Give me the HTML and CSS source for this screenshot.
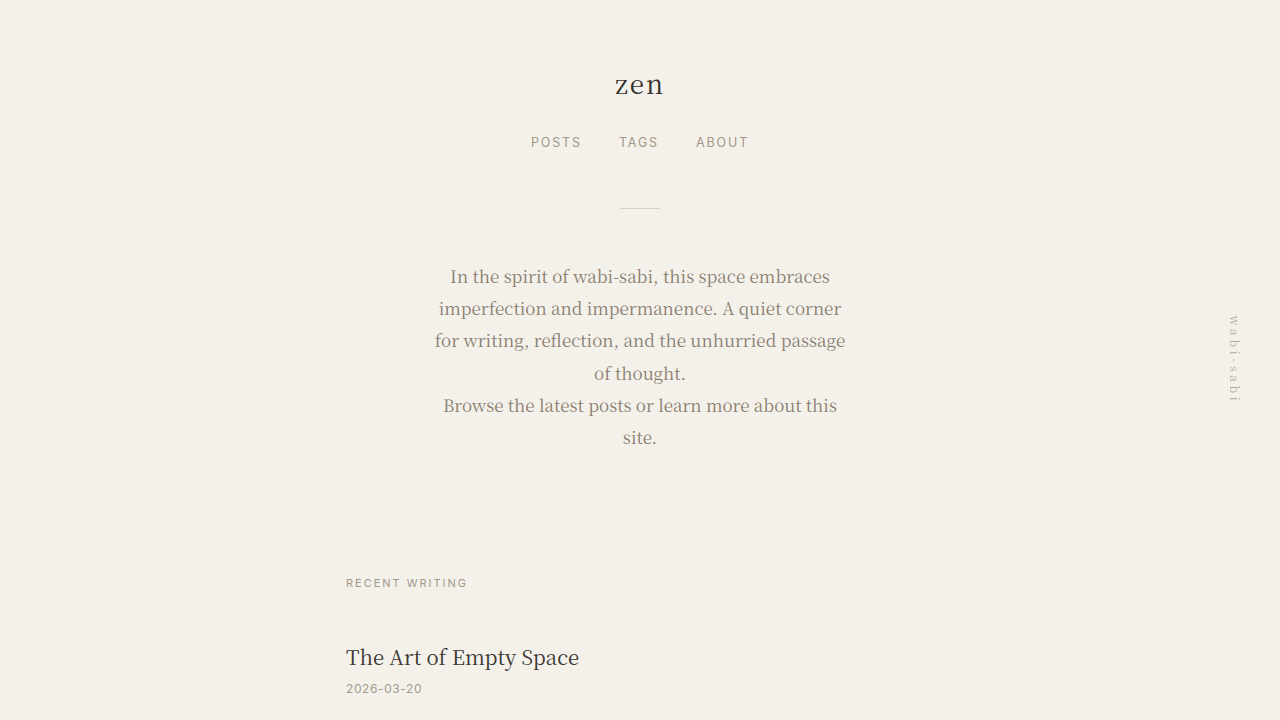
FILE: index.html
```html
<!DOCTYPE html>
<html lang="en">
	<head>
		<meta charset="UTF-8">
		<meta name="viewport" content="width=device-width, initial-scale=1.0" />
		<title>zen</title>
		<link rel="stylesheet" href="styles.css">
	</head>
	<body>
		<header class="site-header">
			<h1 class="site-title">zen</h1>
			<nav class="site-nav">
				<a href="#">Posts</a>
				<a href="#">Tags</a>
				<a href="#">About</a>
			</nav>
			<div class="divider"></div>
		</header>

		<section class="intro">
			<p>In the spirit of wabi-sabi, this space embraces imperfection and impermanence. A quiet corner for writing, reflection, and the unhurried passage of thought.</p>
			<p>Browse the latest posts or learn more about this site.</p>
		</section>

		<main class="recent">
			<h2 class="section-label">Recent Writing</h2>
			<article class="post-item">
				<h3 class="post-title"><a href="#">The Art of Empty Space</a></h3>
				<time class="post-date">2026-03-20</time>
			</article>
		</main>

		<div class="side-mark">wabi-sabi</div>
	</body>
</html>
```

FILE: styles.css
```css
body {
	margin: 0;
	background: #f4f1eb;
	color: #3a3631;
	font-family: "Noto Serif CJK JP", "DejaVu Serif", serif;
}

a {
	color: inherit;
	text-decoration: none;
}

.site-header {
	display: flex;
	flex-direction: column;
	align-items: center;
	padding-top: 65px;
}

.site-title {
	margin: 0;
	font-size: 26px;
	font-weight: 400;
	line-height: 36px;
	letter-spacing: 0.07em;
	color: #34302b;
}

.site-nav {
	display: flex;
	gap: 37px;
	margin-top: 34px;
	font-family: Inter, "Noto Sans", sans-serif;
	font-size: 12.5px;
	line-height: 15px;
	letter-spacing: 0.15em;
	text-transform: uppercase;
	color: #a39786;
}

.divider {
	width: 40px;
	height: 1px;
	background: #d9d1c5;
	margin-top: 58px;
}

.intro {
	width: 420px;
	margin: 51px auto 0;
	text-align: center;
	font-size: 17px;
	line-height: 32.2px;
	color: #8b7e70;
}

.intro p {
	margin: 0;
}

.recent {
	width: 588px;
	margin: 124px auto 0;
}

.section-label {
	margin: 0;
	font-family: Inter, "Noto Sans", sans-serif;
	font-size: 11px;
	font-weight: 400;
	line-height: 13px;
	letter-spacing: 0.18em;
	text-transform: uppercase;
	color: #a39786;
}

.post-item {
	margin-top: 53px;
}

.post-title {
	margin: 0;
	font-size: 20.4px;
	font-weight: 400;
	line-height: 1.4;
	color: #3a3631;
}

.post-date {
	display: block;
	margin-top: 9px;
	font-family: Inter, "Noto Sans", sans-serif;
	font-size: 12px;
	letter-spacing: 0.05em;
	color: #a39a8e;
}

.side-mark {
	position: fixed;
	right: 36px;
	top: 50%;
	transform: translateY(-50%);
	writing-mode: vertical-rl;
	font-size: 12px;
	letter-spacing: 0.3em;
	color: #b3aa9d;
}
```
